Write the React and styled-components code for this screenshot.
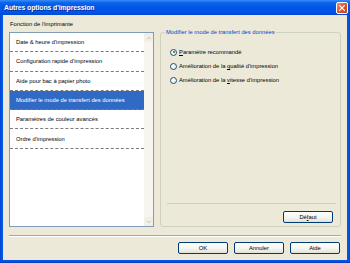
import React from "react";
import styled, { createGlobalStyle } from "styled-components";

const GlobalStyle = createGlobalStyle`
  html, body { margin: 0; padding: 0; background: #ffffff; }
  body { font-family: "Liberation Sans", Arial, sans-serif; }
`;

const items = [
  "Date & heure d'impression",
  "Configuration rapide d'impression",
  "Aide pour bac à papier photo",
  "Modifier le mode de transfert des données",
  "Paramètres de couleur avancés",
  "Ordre d'impression",
];

const App = () => {
  return (
    <>
      <GlobalStyle />
      <Window>
        <TitleBar>
          <Title>Autres options d'impression</Title>
          <CloseButton>
            <svg viewBox="0 0 10 10" width="8" height="8">
              <path d="M2 2 L8 8 M8 2 L2 8" stroke="#fff" strokeWidth="1.6" strokeLinecap="round" />
            </svg>
          </CloseButton>
        </TitleBar>
        <Body>
          <Label>Fonction de l'imprimante</Label>
          <MainRow>
            <ListBox>
              <ListItems>
                {items.map((t, i) => (
                  <ListItem key={t} $selected={i === 3}>
                    {t}
                  </ListItem>
                ))}
              </ListItems>
              <ScrollBar>
                <ScrollArrow>
                  <svg viewBox="0 0 8 8" width="6" height="6">
                    <path d="M1.5 5.5 L4 3 L6.5 5.5" fill="none" stroke="#c3c0af" strokeWidth="1.2" />
                  </svg>
                </ScrollArrow>
                <ScrollArrow>
                  <svg viewBox="0 0 8 8" width="6" height="6">
                    <path d="M1.5 2.5 L4 5 L6.5 2.5" fill="none" stroke="#c3c0af" strokeWidth="1.2" />
                  </svg>
                </ScrollArrow>
              </ScrollBar>
            </ListBox>
            <Group>
              <Legend>Modifier le mode de transfert des données</Legend>
              <Radios>
                <RadioRow>
                  <Radio $checked />
                  <span>
                    <u>P</u>aramètre recommandé
                  </span>
                </RadioRow>
                <RadioRow>
                  <Radio />
                  <span>
                    Amélioration de la <u>q</u>ualité d'impression
                  </span>
                </RadioRow>
                <RadioRow>
                  <Radio />
                  <span>
                    Amélioration de la <u>v</u>itesse d'impression
                  </span>
                </RadioRow>
              </Radios>
              <GroupRule />
              <GroupFooter>
                <Button>
                  Dé<u>f</u>aut
                </Button>
              </GroupFooter>
            </Group>
          </MainRow>
          <Separator />
          <ButtonRow>
            <Button>OK</Button>
            <Button>Annuler</Button>
            <Button>Aide</Button>
          </ButtonRow>
        </Body>
      </Window>
    </>
  );
};

export default App;

// STYLES

const blueXP = "#0055e5";
const faceXP = "#ece9d8";
const fontSize = "5.8px";

const Window = styled.div`
  width: 350px;
  height: 263px;
  box-sizing: border-box;
  display: flex;
  flex-direction: column;
  background: linear-gradient(to right, #0a3fc4 0, ${blueXP} 1px, ${blueXP} calc(100% - 1px), #0a3fc4 100%);
  border-bottom: 1px solid #0a3fc4;
`;

const TitleBar = styled.div`
  height: 15px;
  flex: none;
  display: flex;
  align-items: center;
  justify-content: space-between;
  padding: 0 2px 0 4px;
  background: linear-gradient(
    to bottom,
    #3c8cf8 0%,
    #0a64ec 18%,
    #0055e5 50%,
    #0056ea 82%,
    #0047d0 100%
  );
`;

const Title = styled.span`
  color: #ffffff;
  font-weight: bold;
  font-size: 6.9px;
  line-height: 15px;
  letter-spacing: -0.1px;
  text-shadow: 1px 1px 0 #0a2e9a;
`;

const CloseButton = styled.div`
  width: 12px;
  height: 12px;
  box-sizing: border-box;
  border: 1px solid #ffffff;
  border-radius: 2px;
  background: linear-gradient(135deg, #f08a68 0%, #e0552e 50%, #c8401c 100%);
  display: flex;
  align-items: center;
  justify-content: center;
`;

const Body = styled.div`
  flex: 1;
  margin: 0 3px 2px;
  background: ${faceXP};
  padding: 5px 6px 6px;
  display: flex;
  flex-direction: column;
  font-size: ${fontSize};
  color: #000000;
`;

const Label = styled.div`
  height: 8px;
  line-height: 8px;
  padding-left: 1px;
`;

const MainRow = styled.div`
  height: 199px;
  display: flex;
  gap: 6px;
`;

const ListBox = styled.div`
  width: 145px;
  height: 195px;
  margin-top: 4px;
  box-sizing: border-box;
  border: 1px solid #7f9db9;
  background: #ffffff;
  display: flex;
`;

const ListItems = styled.div`
  flex: 1;
  display: flex;
  flex-direction: column;
`;

const ListItem = styled.div`
  height: 19.3px;
  box-sizing: border-box;
  display: flex;
  align-items: center;
  padding-left: 6px;
  border-bottom: 1px dashed #7c7c7c;
  white-space: nowrap;
  background: ${(p) => (p.$selected ? "#316ac5" : "transparent")};
  color: ${(p) => (p.$selected ? "#ffffff" : "#000000")};
`;

const ScrollBar = styled.div`
  width: 9px;
  background: #f6f5f0;
  display: flex;
  flex-direction: column;
  justify-content: space-between;
`;

const ScrollArrow = styled.div`
  height: 9px;
  background: #f1efe6;
  border-radius: 1px;
  display: flex;
  align-items: center;
  justify-content: center;
`;

const Group = styled.fieldset`
  flex: 1;
  margin: 0;
  padding: 0;
  min-width: 0;
  border: 1px solid #d0d0bf;
  border-radius: 3px;
  display: flex;
  flex-direction: column;
`;

const Legend = styled.legend`
  color: #0046d5;
  padding: 0 1px;
  margin-left: 4px;
  line-height: 8px;
  font-size: ${fontSize};
`;

const Radios = styled.div`
  flex: 1;
  padding: 9px 0 0 9px;
  display: flex;
  flex-direction: column;
`;

const RadioRow = styled.label`
  height: 14px;
  display: flex;
  align-items: center;
  gap: 2px;
  white-space: nowrap;
`;

const Radio = styled.span`
  width: 7px;
  height: 7px;
  box-sizing: border-box;
  border-radius: 50%;
  border: 1px solid #1c5180;
  background: radial-gradient(circle at 35% 35%, #ffffff 0%, #e8e6dc 100%);
  position: relative;
  flex: none;

  &::after {
    content: "";
    display: ${(p) => (p.$checked ? "block" : "none")};
    position: absolute;
    left: 1.5px;
    top: 1.5px;
    width: 2px;
    height: 2px;
    border-radius: 50%;
    background: #2a6a2a;
  }
`;

const GroupRule = styled.div`
  height: 1px;
  margin: 0 4px 0 6px;
  background: #d0d0bf;
`;

const GroupFooter = styled.div`
  display: flex;
  justify-content: flex-end;
  padding: 7px 7px 3px;
`;

const Button = styled.button`
  width: 50px;
  height: 12px;
  padding: 0;
  box-sizing: border-box;
  border: 1px solid #003c74;
  border-radius: 2px;
  background: linear-gradient(to bottom, #ffffff 0%, #f4f3ee 60%, #e3e0d6 100%);
  font-family: "Liberation Sans", Arial, sans-serif;
  font-size: ${fontSize};
  color: #000000;
  line-height: 10px;
`;

const Separator = styled.div`
  height: 1px;
  margin-top: 8px;
  background: #aca899;
  border-bottom: 1px solid #ffffff;
`;

const ButtonRow = styled.div`
  display: flex;
  justify-content: flex-end;
  gap: 6px;
  margin-top: 5px;
  padding-right: 1px;
`;
